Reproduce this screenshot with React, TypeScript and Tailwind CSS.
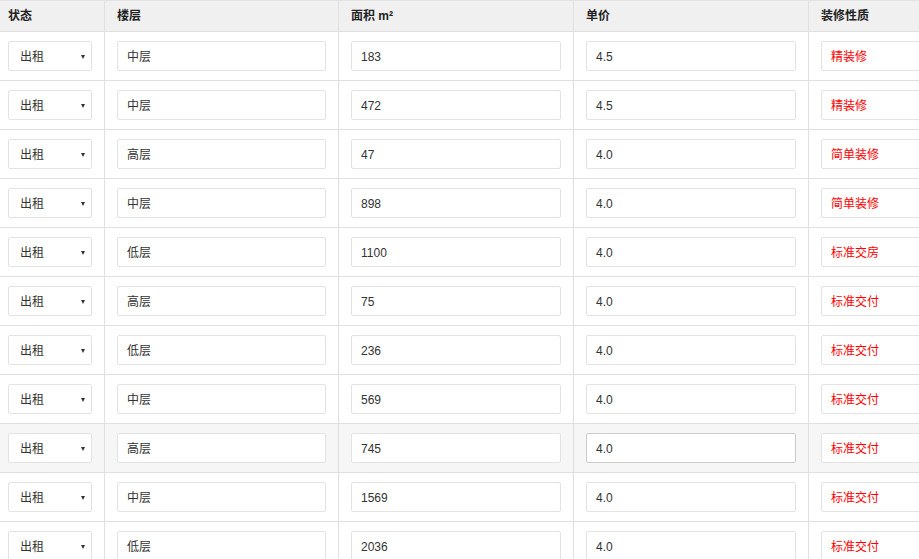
import React from "react";

const rows: [string, string, string, string][] = [
  ["中层", "183", "4.5", "精装修"],
  ["中层", "472", "4.5", "精装修"],
  ["高层", "47", "4.0", "简单装修"],
  ["中层", "898", "4.0", "简单装修"],
  ["低层", "1100", "4.0", "标准交房"],
  ["高层", "75", "4.0", "标准交付"],
  ["低层", "236", "4.0", "标准交付"],
  ["中层", "569", "4.0", "标准交付"],
  ["高层", "745", "4.0", "标准交付"],
  ["中层", "1569", "4.0", "标准交付"],
  ["低层", "2036", "4.0", "标准交付"],
];

const font = { fontFamily: '"Liberation Sans", Arial, "Noto Sans CJK SC", sans-serif' };

function Box({ children, red, dark }: { children: React.ReactNode; red?: boolean; dark?: boolean }) {
  return (
    <div
      className={`h-[30px] w-full flex items-center pl-[9px] pt-[2px] rounded-[2px] bg-white border ${
        dark ? "border-[#cccccc]" : "border-[#e3e3e3]"
      } text-[12px] ${red ? "text-[#ff0000]" : "text-[#333333]"}`}
    >
      {children}
    </div>
  );
}

export default function App() {
  return (
    <div className="w-[919px] h-[559px] overflow-hidden bg-white" style={font}>
      <div className="w-[1100px] border-t border-[#e3e3e3]">
        <div className="grid grid-cols-[105px_234px_235px_235px_235px] h-[31px] bg-[#f0f0f0] border-b border-[#e0e0e0] text-[12px] font-bold text-[#222]">
          <div className="flex items-center pl-[8px] border-r border-[#e0e0e0]">状态</div>
          <div className="flex items-center pl-[12px] border-r border-[#e0e0e0]">楼层</div>
          <div className="flex items-center pl-[12px] border-r border-[#e0e0e0]">面积 m²</div>
          <div className="flex items-center pl-[12px] border-r border-[#e0e0e0]">单价</div>
          <div className="flex items-center pl-[12px] border-r border-[#e0e0e0]">装修性质</div>
        </div>
        {rows.map((r, i) => {
          const hl = i === 8;
          return (
            <div
              key={i}
              className={`grid grid-cols-[105px_234px_235px_235px_235px] h-[49px] border-b border-[#e0e0e0] ${
                hl ? "bg-[#f6f6f6]" : "bg-white"
              }`}
            >
              <div className="flex items-center pl-[8px] pr-[12px] border-r border-[#e0e0e0]">
                <div className="h-[30px] w-full flex items-center justify-between pl-[11px] pr-[6px] pt-[2px] rounded-[2px] bg-white border border-[#e3e3e3] text-[12px] text-[#333]">
                  <span>出租</span>
                  <svg width="4" height="4" viewBox="0 0 4 4">
                    <path d="M0 0 L4 0 L2 4 Z" fill="#333" />
                  </svg>
                </div>
              </div>
              <div className="flex items-center px-[12px] border-r border-[#e0e0e0]">
                <Box>{r[0]}</Box>
              </div>
              <div className="flex items-center px-[12px] border-r border-[#e0e0e0]">
                <Box>{r[1]}</Box>
              </div>
              <div className="flex items-center px-[12px] border-r border-[#e0e0e0]">
                <Box dark={hl}>{r[2]}</Box>
              </div>
              <div className="flex items-center px-[12px] border-r border-[#e0e0e0]">
                <Box red>{r[3]}</Box>
              </div>
            </div>
          );
        })}
      </div>
    </div>
  );
}
